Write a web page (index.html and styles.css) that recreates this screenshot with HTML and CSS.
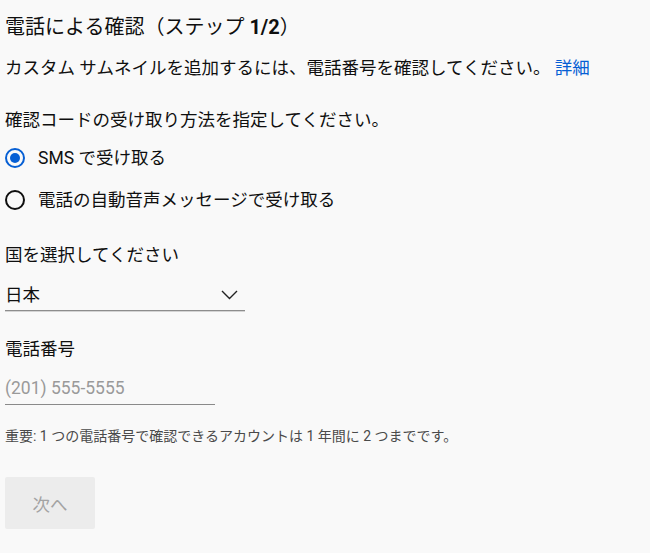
FILE: index.html
```html
<!DOCTYPE html>
<html lang="ja">
<head>
<meta charset="utf-8">
<title>電話による確認</title>
<link rel="stylesheet" href="styles.css">
</head>
<body>
<main class="page">
  <h1 class="title">電話による確認（ステップ <span class="step">1/2</span>）</h1>
  <p class="desc">カスタム サムネイルを追加するには、電話番号を確認してください。 <a class="link" href="#">詳細</a></p>
  <p class="prompt">確認コードの受け取り方法を指定してください。</p>
  <div class="radios">
    <label class="radio-row">
      <span class="radio checked"><span class="dot"></span></span>
      <span class="radio-label">SMS で受け取る</span>
    </label>
    <label class="radio-row">
      <span class="radio"></span>
      <span class="radio-label">電話の自動音声メッセージで受け取る</span>
    </label>
  </div>
  <p class="field-label country-label">国を選択してください</p>
  <div class="select">
    <span class="select-value">日本</span>
    <svg class="chevron" width="17" height="10" viewBox="0 0 17 10"><polyline points="1,1 8.5,8.5 16,1" fill="none" stroke="#222" stroke-width="1.4"/></svg>
  </div>
  <p class="field-label phone-label">電話番号</p>
  <div class="input-wrap">
    <input class="phone-input" type="text" placeholder="(201) 555-5555">
  </div>
  <p class="note">重要: 1 つの電話番号で確認できるアカウントは 1 年間に 2 つまでです。</p>
  <button class="next" type="button" disabled>次へ</button>
</main>
</body>
</html>
```
FILE: styles.css
```css
html, body {
  margin: 0;
  padding: 0;
  background: #f9f9f9;
}
body {
  font-family: Roboto, "Noto Sans CJK JP", "Noto Sans", sans-serif;
  color: #0f0f0f;
}
.page {
  display: flex;
  flex-direction: column;
  align-items: flex-start;
  padding: 13px 0 0 5px;
}
.title {
  margin: 0;
  font-size: 20px;
  font-weight: 400;
  line-height: 28px;
}
.step {
  font-weight: 700;
}
.desc {
  margin: 15px 0 0;
  font-size: 17.5px;
  line-height: 24px;
}
.link {
  color: #065fd4;
  text-decoration: none;
}
.prompt {
  margin: 28px 0 0;
  font-size: 17.5px;
  line-height: 24px;
}
.radios {
  display: flex;
  flex-direction: column;
  margin-top: 5px;
}
.radio-row {
  display: flex;
  align-items: center;
  gap: 13px;
  height: 42px;
}
.radio {
  box-sizing: border-box;
  width: 20px;
  height: 20px;
  border: 2px solid #0f0f0f;
  border-radius: 50%;
  display: flex;
  align-items: center;
  justify-content: center;
}
.radio.checked {
  border-color: #065fd4;
}
.dot {
  width: 10px;
  height: 10px;
  border-radius: 50%;
  background: #065fd4;
}
.radio-label {
  font-size: 17.5px;
  line-height: 24px;
}
.field-label {
  margin: 0;
  font-size: 17.5px;
  line-height: 24px;
}
.country-label {
  margin-top: 22px;
}
.select {
  margin-top: 16px;
  box-sizing: border-box;
  width: 240px;
  display: flex;
  align-items: center;
  justify-content: space-between;
  padding: 0 7px 3px 0;
  border-bottom: 1px solid #8d8d8d;
  box-shadow: 0 1px 0 #d4d4d4;
}
.select-value {
  font-size: 17.5px;
  line-height: 24px;
}
.chevron {
  display: block;
}
.phone-label {
  margin-top: 26px;
}
.input-wrap {
  margin-top: 15px;
  width: 210px;
  border-bottom: 1px solid #8a8a8a;
  padding-bottom: 4px;
}
.phone-input {
  display: block;
  width: 100%;
  box-sizing: border-box;
  border: none;
  outline: none;
  background: transparent;
  padding: 0;
  margin: 0;
  font-family: Roboto, "Noto Sans CJK JP", sans-serif;
  font-size: 17.5px;
  line-height: 24px;
  height: 24px;
  color: #0f0f0f;
}
.phone-input::placeholder {
  color: #9a9a9a;
}
.note {
  margin: 21px 0 0;
  font-size: 14px;
  line-height: 20px;
  color: #4a4a4a;
}
.next {
  margin-top: 31px;
  width: 90px;
  height: 52px;
  border: none;
  border-radius: 2px;
  background: #ececec;
  color: #a3a3a3;
  font-family: Roboto, "Noto Sans CJK JP", sans-serif;
  font-size: 17.5px;
  padding: 0;
}
```
